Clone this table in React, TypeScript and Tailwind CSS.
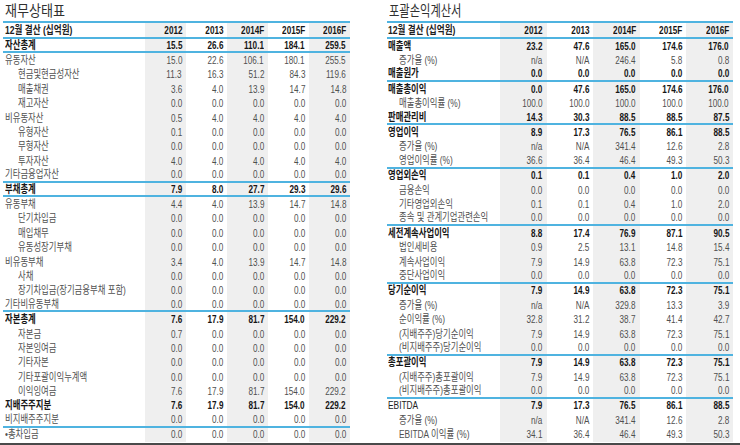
import clsx from "clsx"

type Row = {
  label: string
  vals: string[]
  bold?: boolean // 굵은 합계 행
  plainLabel?: boolean // 숫자만 굵게
  indent?: boolean
  line?: boolean // 아래 파란 구분선
}

const Z = ["0.0", "0.0", "0.0", "0.0", "0.0"]
const YEARS = ["2012", "2013", "2014F", "2015F", "2016F"]

const balance: Row[] = [
  { label: "자산총계", vals: ["15.5", "26.6", "110.1", "184.1", "259.5"], bold: true, line: true },
  { label: "유동자산", vals: ["15.0", "22.6", "106.1", "180.1", "255.5"] },
  { label: "현금및현금성자산", vals: ["11.3", "16.3", "51.2", "84.3", "119.6"], indent: true },
  { label: "매출채권", vals: ["3.6", "4.0", "13.9", "14.7", "14.8"], indent: true },
  { label: "재고자산", vals: Z, indent: true },
  { label: "비유동자산", vals: ["0.5", "4.0", "4.0", "4.0", "4.0"] },
  { label: "유형자산", vals: ["0.1", "0.0", "0.0", "0.0", "0.0"], indent: true },
  { label: "무형자산", vals: Z, indent: true },
  { label: "투자자산", vals: ["4.0", "4.0", "4.0", "4.0", "4.0"], indent: true },
  { label: "기타금융업자산", vals: Z, line: true },
  { label: "부채총계", vals: ["7.9", "8.0", "27.7", "29.3", "29.6"], bold: true, line: true },
  { label: "유동부채", vals: ["4.4", "4.0", "13.9", "14.7", "14.8"] },
  { label: "단기차입금", vals: Z, indent: true },
  { label: "매입채무", vals: Z, indent: true },
  { label: "유동성장기부채", vals: Z, indent: true },
  { label: "비유동부채", vals: ["3.4", "4.0", "13.9", "14.7", "14.8"] },
  { label: "사채", vals: Z, indent: true },
  { label: "장기차입금(장기금융부채 포함)", vals: Z, indent: true },
  { label: "기타비유동부채", vals: Z, line: true },
  { label: "자본총계", vals: ["7.6", "17.9", "81.7", "154.0", "229.2"], bold: true },
  { label: "자본금", vals: ["0.7", "0.0", "0.0", "0.0", "0.0"], indent: true },
  { label: "자본잉여금", vals: Z, indent: true },
  { label: "기타자본", vals: Z, indent: true },
  { label: "기타포괄이익누계액", vals: Z, indent: true },
  { label: "이익잉여금", vals: ["7.6", "17.9", "81.7", "154.0", "229.2"], indent: true },
  { label: "지배주주지분", vals: ["7.6", "17.9", "81.7", "154.0", "229.2"], bold: true },
  { label: "비지배주주지분", vals: Z, line: true },
  { label: "•총차입금", vals: Z },
]

const income: Row[] = [
  { label: "매출액", vals: ["23.2", "47.6", "165.0", "174.6", "176.0"], bold: true },
  { label: "증가율 (%)", vals: ["n/a", "N/A", "246.4", "5.8", "0.8"], indent: true },
  { label: "매출원가", vals: Z, bold: true, line: true },
  { label: "매출총이익", vals: ["0.0", "47.6", "165.0", "174.6", "176.0"], bold: true },
  { label: "매출총이익률 (%)", vals: ["100.0", "100.0", "100.0", "100.0", "100.0"], indent: true },
  { label: "판매관리비", vals: ["14.3", "30.3", "88.5", "88.5", "87.5"], bold: true, line: true },
  { label: "영업이익", vals: ["8.9", "17.3", "76.5", "86.1", "88.5"], bold: true },
  { label: "증가율 (%)", vals: ["n/a", "N/A", "341.4", "12.6", "2.8"], indent: true },
  { label: "영업이익률 (%)", vals: ["36.6", "36.4", "46.4", "49.3", "50.3"], indent: true, line: true },
  { label: "영업외손익", vals: ["0.1", "0.1", "0.4", "1.0", "2.0"], bold: true },
  { label: "금융손익", vals: Z, indent: true },
  { label: "기타영업외손익", vals: ["0.1", "0.1", "0.4", "1.0", "2.0"], indent: true },
  { label: "종속 및 관계기업관련손익", vals: Z, indent: true, line: true },
  { label: "세전계속사업이익", vals: ["8.8", "17.4", "76.9", "87.1", "90.5"], bold: true },
  { label: "법인세비용", vals: ["0.9", "2.5", "13.1", "14.8", "15.4"], indent: true },
  { label: "계속사업이익", vals: ["7.9", "14.9", "63.8", "72.3", "75.1"], indent: true },
  { label: "중단사업이익", vals: Z, indent: true, line: true },
  { label: "당기순이익", vals: ["7.9", "14.9", "63.8", "72.3", "75.1"], bold: true },
  { label: "증가율 (%)", vals: ["n/a", "N/A", "329.8", "13.3", "3.9"], indent: true },
  { label: "순이익률 (%)", vals: ["32.8", "31.2", "38.7", "41.4", "42.7"], indent: true },
  { label: "(지배주주)당기순이익", vals: ["7.9", "14.9", "63.8", "72.3", "75.1"], indent: true },
  { label: "(비지배주주)당기순이익", vals: Z, indent: true, line: true },
  { label: "총포괄이익", vals: ["7.9", "14.9", "63.8", "72.3", "75.1"], bold: true },
  { label: "(지배주주)총포괄이익", vals: ["7.9", "14.9", "63.8", "72.3", "75.1"], indent: true },
  { label: "(비지배주주)총포괄이익", vals: Z, indent: true, line: true },
  { label: "EBITDA", vals: ["7.9", "17.3", "76.5", "86.1", "88.5"], bold: true, plainLabel: true },
  { label: "증가율 (%)", vals: ["n/a", "N/A", "341.4", "12.6", "2.8"], indent: true },
  { label: "EBITDA 이익률 (%)", vals: ["34.1", "36.4", "46.4", "49.3", "50.3"], indent: true },
]

type Layout = {
  labelW: string
  colW: string
  pad: string
  indent: string
}

function Num({ v, bold, shaded, colW }: { v: string; bold?: boolean; shaded: boolean; colW: string }) {
  return (
    <div className={clsx("flex h-full items-center justify-end pr-[4px]", colW, shaded && "bg-[#efefef]")}>
      <span
        className={clsx(
          "inline-block origin-right scale-x-[0.74] whitespace-nowrap",
          bold ? "font-bold text-[#161616]" : "text-[#505050]"
        )}
      >
        {v}
      </span>
    </div>
  )
}

function Table({ title, rows, lay, titleScale }: { title: string; rows: Row[]; lay: Layout; titleScale: string }) {
  return (
    <div className="flex flex-col">
      {/* 제목 */}
      <div className="flex h-[21px] items-center pl-[2px] pt-[2px]">
        <span className={clsx("inline-block origin-left whitespace-nowrap text-[15px] text-[#303030]", titleScale)}>
          {title}
        </span>
      </div>

      {/* 헤더 */}
      <div className="flex h-[18px] border-y-2 border-[#4fb3e0] text-[11px] leading-none">
        <div className={clsx("flex h-full items-center", lay.labelW, lay.pad)}>
          <span className="inline-block origin-left scale-x-[0.78] whitespace-nowrap font-bold text-[#202020]">
            12월 결산 (십억원)
          </span>
        </div>
        {YEARS.map((y, i) => (
          <Num key={y} v={y} bold shaded={i % 2 === 0} colW={lay.colW} />
        ))}
      </div>

      {/* 본문 */}
      {rows.map((r, ri) => (
        <div
          key={ri}
          className={clsx(
            "flex h-[14.4px] text-[11px] leading-none",
            r.line && "border-b-2 border-[#4fb3e0]"
          )}
        >
          <div className={clsx("flex h-full items-center", lay.labelW, r.indent ? lay.indent : lay.pad)}>
            <span
              className={clsx(
                "inline-block origin-left scale-x-[0.76] whitespace-nowrap",
                r.bold && !r.plainLabel ? "font-bold text-[#161616]" : r.plainLabel ? "text-[#222]" : "text-[#505050]"
              )}
            >
              {r.label}
            </span>
          </div>
          {r.vals.map((v, i) => (
            <Num key={i} v={v} bold={r.bold} shaded={i % 2 === 0} colW={lay.colW} />
          ))}
        </div>
      ))}
    </div>
  )
}

export default function App() {
  return (
    <div
      className="flex h-[445px] w-[740px] flex-col overflow-hidden bg-white"
      style={{ fontFamily: '"Liberation Sans", "Noto Sans CJK KR", sans-serif' }}
    >
      <div className="flex gap-[37px] pl-[3px]">
        <Table
          title="재무상태표"
          rows={balance}
          titleScale="scale-x-[0.87]"
          lay={{ labelW: "w-[142px]", colW: "w-[41px]", pad: "pl-[2px]", indent: "pl-[15px]" }}
        />
        <Table
          title="포괄손익계산서"
          rows={income}
          titleScale="scale-x-[0.75]"
          lay={{ labelW: "w-[113px]", colW: "w-[46.6px]", pad: "pl-[1px]", indent: "pl-[12px]" }}
        />
      </div>

      {/* 하단 구분 바 */}
      <div className="mt-auto h-[2px] w-full bg-[#4a4a4a]" />
    </div>
  )
}
